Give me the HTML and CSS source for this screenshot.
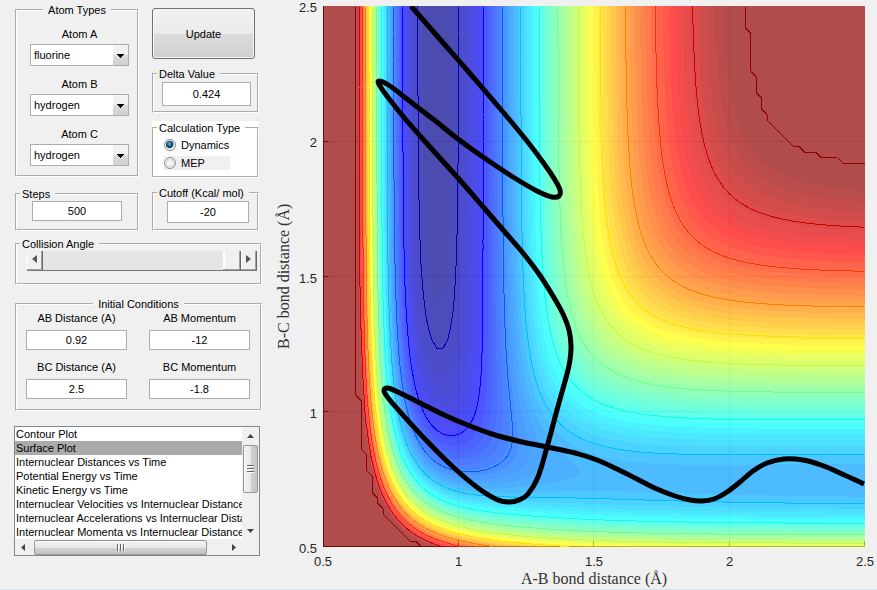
FILE: index.html
```html
<!DOCTYPE html>
<html lang="en">
<head>
<meta charset="utf-8">
<title>LEPS surface explorer</title>
<link rel="stylesheet" href="styles.css">
</head>
<body>
<main class="app">
  <form class="sidebar">
    <div class="columns">
      <div class="column column-left">
        <fieldset class="panel">
          <legend class="legend-center">Atom Types</legend>
          <div class="content atoms">
            <div class="field"><label for="atom-a">Atom A</label>
              <select id="atom-a" class="combo"><option>fluorine</option><option>hydrogen</option></select></div>
            <div class="field"><label for="atom-b">Atom B</label>
              <select id="atom-b" class="combo"><option>hydrogen</option><option>fluorine</option></select></div>
            <div class="field"><label for="atom-c">Atom C</label>
              <select id="atom-c" class="combo"><option>hydrogen</option><option>fluorine</option></select></div>
          </div>
        </fieldset>
        <fieldset class="panel">
          <legend>Steps</legend>
          <div class="content steps"><input class="box" type="text" value="500" aria-label="Steps"></div>
        </fieldset>
      </div>
      <div class="column column-right">
        <button class="update" type="button">Update</button>
        <fieldset class="panel">
          <legend>Delta Value</legend>
          <div class="content delta"><input class="box box-tall" type="text" value="0.424" aria-label="Delta Value"></div>
        </fieldset>
        <div class="paper">
          <fieldset class="panel">
            <legend>Calculation Type</legend>
            <div class="content calc">
              <label class="radio"><input type="radio" name="calc" checked>Dynamics</label>
              <label class="radio radio-shaded"><input type="radio" name="calc">MEP</label>
            </div>
          </fieldset>
        </div>
        <fieldset class="panel">
          <legend>Cutoff (Kcal/ mol)</legend>
          <div class="content cutoff"><input class="box box-mid" type="text" value="-20" aria-label="Cutoff (Kcal/ mol)"></div>
        </fieldset>
      </div>
    </div>

    <fieldset class="panel panel-angle">
      <legend>Collision Angle</legend>
      <div class="content angle">
        <div class="slider">
          <button type="button" class="step" aria-label="Decrease"><svg width="5" height="8" viewBox="0 0 5 8"><path d="M5 0v8L0 4z"/></svg></button>
          <input type="range" min="0" max="180" value="180" aria-label="Collision Angle">
          <button type="button" class="step" aria-label="Increase"><svg width="5" height="8" viewBox="0 0 5 8"><path d="M0 0v8l5-4z"/></svg></button>
        </div>
      </div>
    </fieldset>

    <fieldset class="panel panel-initial">
      <legend class="legend-center">Initial Conditions</legend>
      <div class="content pairs">
        <div class="field"><label for="ab-d">AB Distance (A)</label><input id="ab-d" class="box" type="text" value="0.92"></div>
        <div class="field"><label for="ab-m">AB Momentum</label><input id="ab-m" class="box" type="text" value="-12"></div>
        <div class="field"><label for="bc-d">BC Distance (A)</label><input id="bc-d" class="box" type="text" value="2.5"></div>
        <div class="field"><label for="bc-m">BC Momentum</label><input id="bc-m" class="box" type="text" value="-1.8"></div>
      </div>
    </fieldset>

    <div class="listbox">
      <select class="list" size="8" aria-label="Plot type">
        <option>Contour Plot</option>
        <option selected>Surface Plot</option>
        <option>Internuclear Distances vs Time</option>
        <option>Potential Energy vs Time</option>
        <option>Kinetic Energy vs Time</option>
        <option>Internuclear Velocities vs Internuclear Distance</option>
        <option>Internuclear Accelerations vs Internuclear Distance</option>
        <option>Internuclear Momenta vs Internuclear Distance</option>
      </select>
      <div class="vbar">
        <svg width="7" height="4" viewBox="0 0 7 4"><path d="M0 4h7L3.500 0z"/></svg>
        <div class="grip grip-v"><i></i><i></i><i></i></div>
        <svg class="vbar-down" width="7" height="4" viewBox="0 0 7 4"><path d="M0 0h7L3.500 4z"/></svg>
      </div>
      <div class="hbar">
        <svg width="4" height="7" viewBox="0 0 4 7"><path d="M4 0v7L0 3.500z"/></svg>
        <div class="grip grip-h"><i></i><i></i><i></i></div>
        <svg class="hbar-right" width="4" height="7" viewBox="0 0 4 7"><path d="M0 0v7l4-3.500z"/></svg>
      </div>
    </div>
  </form>

  <section class="figure">
    <div class="y-label">B-C bond distance (Å)</div>
    <ul class="y-ticks"><li>2.5</li><li>2</li><li>1.5</li><li>1</li><li>0.5</li></ul>
    <div class="plot">
      <svg viewBox="0 0 542 541">
        <path class="grid" d="M135.500 0V541M270.500 0V541M406.500 0V541M0 135.500H542M0 270.500H542M0 405.500H542"/>
        <path class="axis" d="M.5 0V540.500H542M.5 135.500h5M.5 270.500h5M.5 405.500h5M135.500 541v-6M270.500 541v-6M406.500 541v-6M541.500 541v-6"/>
      </svg>
      <canvas id="surface" width="542" height="541"></canvas>
      <svg class="overlay" viewBox="0 0 542 541"><g id="contours"></g><path id="path" class="path"/></svg>
    </div>
    <ul class="x-ticks"><li>0.5</li><li>1</li><li>1.5</li><li>2</li><li>2.5</li></ul>
    <div class="x-label">A-B bond distance (Å)</div>
  </section>
</main>
<script src="surface.js"></script>
</body>
</html>
```
FILE: styles.css
```css
* { box-sizing: border-box; }

body {
  margin: 0;
  min-height: 100vh;
  padding-top: 3px;
  background: #f0f0f0;
  border-bottom: 1px solid #d4e2f0;
  color: #000;
  font: 11px/14px "Liberation Sans", Arial, sans-serif;
}

input, select, button { font: inherit; color: inherit; margin: 0; }
ul { list-style: none; margin: 0; padding: 0; }
svg { display: block; }

.app { display: flex; align-items: flex-start; padding: 0 12px 0 15px; }
.sidebar { flex: none; width: 247px; }
.columns { display: grid; grid-template-columns: 124px 107px; column-gap: 13px; }
.column { display: flex; flex-direction: column; }
.column-left { gap: 10px; }
.column-right { gap: 8px; padding-top: 5px; }

/* Etched group boxes */
.panel { margin: 0; min-width: 0; border: 2px groove #fff; padding: 0 3px; }
.panel legend { padding: 0 5px 0 2px; white-space: nowrap; }
.panel .legend-center { margin: 0 auto; padding: 0 5px; }
.atoms { padding: 10px 5px 9px 10px; }
.steps { padding: 0 12px 8px; }
.delta { padding: 1px 3px 5px 5px; }
.cutoff { padding: 1px 5px 6px 10px; }
.calc { padding: 1px 5px 4px 7px; }
.angle { padding: 0 0 12px 7px; }
.pairs { padding: 0 6px 10px; display: grid; grid-template-columns: 101px 101px; gap: 10px 22px; }
.panel-angle { margin-top: 6px; }
.panel-initial { margin-top: 12px; }
.paper { background: #fff; }

.field { display: flex; flex-direction: column; text-align: center; gap: 5px; }
.atoms .field { gap: 3px; }
.atoms .field + .field { margin-top: 11px; }

.box {
  display: block;
  width: 100%;
  height: 20px;
  padding: 0;
  border: 1px solid #abadb3;
  background: #fff;
  text-align: center;
}
.box-mid { height: 22px; }
.box-tall { height: 24px; }

.combo {
  appearance: none;
  width: 100%;
  height: 22px;
  padding: 0 0 0 3px;
  border: 1px solid #abadb3;
  border-radius: 0;
  background:
    linear-gradient(#000, #000) right 4px top 9px / 7px 1px no-repeat,
    linear-gradient(#000, #000) right 5px top 10px / 5px 1px no-repeat,
    linear-gradient(#000, #000) right 6px top 11px / 3px 1px no-repeat,
    linear-gradient(#000, #000) right 7px top 12px / 1px 1px no-repeat,
    linear-gradient(#f2f2f2 50%, #dcdcdc 50%, #d0d0d0) right 0 top 0 / 15px 100% no-repeat,
    #fff;
}

.update {
  height: 51px;
  width: 103px;
  border: 1px solid #707070;
  border-radius: 3px;
  box-shadow: inset 0 0 0 1px #f6f6f6;
  background: linear-gradient(#f2f2f2, #ebebeb 50%, #dcdcdc 50%, #cfcfcf);
}

.radio { display: flex; align-items: center; gap: 5px; height: 18px; }
.radio input {
  appearance: none;
  width: 12px;
  height: 12px;
  border: 1px solid #8e8f8f;
  border-radius: 50%;
  background: radial-gradient(circle, #f4f4f4 30%, #d0d3d6 60%);
  box-shadow: inset 0 0 0 1px #f4f4f4;
}
.radio input:checked { background: radial-gradient(circle at 45% 40%, #7cc8e8 0, #1a6f9c 22%, #0c3550 46%, #dfe3e6 52%); }
.radio-shaded { height: 14px; width: 66px; margin: 2px 0; background: #f0f0f0; }

.slider { display: flex; height: 20px; border-bottom: 1px solid #777; background: #e5e5e5; }
.step {
  display: flex;
  align-items: center;
  justify-content: center;
  width: 16px;
  padding: 0 0 3px;
  border: 0;
  border-right: 1px solid #696969;
  background: #f0f0f0;
  box-shadow: inset -1px -1px #a0a0a0, inset 1px 0 #fff;
}
.step svg { fill: #555; }
.slider input { appearance: none; flex: 1; min-width: 0; height: 19px; background: #e5e5e5; }
.slider input::-webkit-slider-thumb {
  appearance: none;
  width: 18px;
  height: 19px;
  background: #f0f0f0;
  border-right: 1px solid #696969;
  box-shadow: inset -1px -1px #a0a0a0, inset 2px 0 #fff;
}

.listbox {
  display: grid;
  grid-template: 112px 16px / 1fr 17px;
  width: 246px;
  margin: 15px 0 0 -1px;
  border: 1px solid #828790;
  background: #f0f0f0;
}
.list {
  width: 100%;
  height: 112px;
  padding: 0;
  border: 0;
  border-radius: 0;
  background: #fff;
  overflow: hidden;
  outline: none;
}
.list::-webkit-scrollbar { display: none; }
.list option { min-height: 14px; height: 14px; padding: 1px 1px 0; line-height: 14px; color: #000; }
.list option:checked { background: linear-gradient(#aaa, #aaa); color: #000; }
.vbar, .hbar { display: flex; align-items: center; background: #f0f0f0; }
.vbar { flex-direction: column; padding: 7px 0 6px; }
.vbar-down { margin-top: auto; }
.hbar { padding: 0 6px 0 6px; }
.hbar-right { margin-left: auto; }
.vbar svg, .hbar svg { fill: #444; }
.grip { display: flex; align-items: center; justify-content: center; gap: 1px; border: 1px solid #979797; border-radius: 2px; }
.grip-v { flex-direction: column; width: 15px; height: 48px; margin-top: 7px; background: linear-gradient(90deg, #f5f5f5, #e6e6e6 50%, #d2d2d2 50%, #c4c4c4); }
.grip-h { width: 173px; height: 15px; margin-left: 9px; background: linear-gradient(#f5f5f5, #e6e6e6 50%, #d2d2d2 50%, #c4c4c4); }
.grip i { background: #666; border: 0 solid #fff; }
.grip-v i { width: 7px; height: 2px; border-bottom-width: 1px; }
.grip-h i { width: 2px; height: 7px; border-right-width: 1px; }

/* Plot */
.figure {
  flex: 1;
  min-width: 0;
  display: grid;
  grid-template-columns: 18px 18px minmax(0, 1fr);
  column-gap: 6px;
  margin-left: 13px;
  padding-top: 3px;
  color: #262626;
}
.y-label, .x-label { font: 16px/18px "Liberation Serif", "Times New Roman", serif; text-align: center; color: #333; }
.y-label { writing-mode: vertical-rl; transform: rotate(180deg); }
.x-label { grid-column: 3; }
.y-ticks, .x-ticks { display: flex; justify-content: space-between; font-size: 13px; line-height: 16px; }
.y-ticks { flex-direction: column; text-align: right; }
.y-ticks li { height: 0; line-height: 4px; }
.x-ticks { grid-column: 3; padding-top: 7px; }
.x-ticks li { width: 0; display: flex; justify-content: center; }
.plot { display: grid; background: #fff; }
.plot > * { grid-area: 1 / 1; display: block; width: 100%; }
.plot canvas { opacity: .7; }
.overlay { z-index: 1; }
.grid { stroke: #262626; stroke-opacity: .15; }
.axis { stroke: #262626; fill: none; }
.contour { fill: none; stroke-width: 1; shape-rendering: crispEdges; }
.path { fill: none; stroke: #000; stroke-width: 5; stroke-linejoin: round; }
```
FILE: surface.js
```js
// London-Eyring-Polanyi-Sato potential for collinear F + H2, in kcal/mol.
const FH = { D: 141.2, b: 2.2187, r: 0.917, S: 0.167 };
const HH = { D: 109.45, b: 1.942, r: 0.7419, S: 0.2 };
const CUTOFF = -22.3, FLOOR = -141.2, SPACING = 10.45;

function bond(p, r) {
  const e = Math.exp(-p.b * (r - p.r));
  const s = p.D * (e * e - 2 * e);
  const t = p.D / 2 * (e * e + 2 * e) * (1 - p.S) / (1 + p.S);
  return [(s + t) / 2, (s - t) / 2];
}
function energy(x, y) {
  const [q1, j1] = bond(FH, x), [q2, j2] = bond(HH, y), [q3, j3] = bond(FH, x + y);
  const v = q1 + q2 + q3 - Math.sqrt(((j1 - j2) ** 2 + (j2 - j3) ** 2 + (j3 - j1) ** 2) / 2);
  return Math.min(v, CUTOFF);
}

// 64-step jet colour map
function jet(v) {
  const n = Math.max(0, Math.min(62, Math.floor((v - FLOOR) / (CUTOFF - FLOOR) * 64))) + 1;
  const ramp = c => Math.round(255 * Math.max(0, Math.min(1, 1.5 - Math.abs(n - c) / 16)));
  return [ramp(48), ramp(32), ramp(16)];
}

const W = 542, H = 541;
const canvas = document.getElementById('surface');
const ctx = canvas.getContext('2d');
const image = ctx.createImageData(W, H);
for (let j = 0; j < H; j++) {
  for (let i = 0; i < W; i++) {
    const c = jet(energy(0.5 + 2 * i / (W - 1), 2.5 - 2 * j / (H - 1)));
    image.data.set([c[0], c[1], c[2], 255], 4 * (j * W + i));
  }
}
ctx.putImageData(image, 0, 0);

// Contour lines by marching squares on a 0.02 grid
const N = 100;
const v = [];
for (let j = 0; j <= N; j++) {
  v.push([]);
  for (let i = 0; i <= N; i++) v[j].push(energy(0.5 + i * 0.02, 2.5 - j * 0.02));
}
const px = i => 0.5 + i * (W - 1) / N, py = j => 0.5 + j * (H - 1) / N;
const group = document.getElementById('contours');
for (let k = 0; k < 12; k++) {
  const level = CUTOFF - k * SPACING;
  let d = '';
  for (let j = 0; j < N; j++) {
    for (let i = 0; i < N; i++) {
      const corners = [[i, j], [i + 1, j], [i + 1, j + 1], [i, j + 1]];
      const cuts = [];
      corners.forEach((a, n) => {
        const b = corners[(n + 1) % 4];
        const va = v[a[1]][a[0]], vb = v[b[1]][b[0]];
        if ((va >= level) !== (vb >= level)) {
          const t = (level - va) / (vb - va);
          cuts.push([px(a[0] + t * (b[0] - a[0])), py(a[1] + t * (b[1] - a[1]))]);
        }
      });
      for (let n = 0; n + 1 < cuts.length; n += 2) {
        d += 'M' + cuts[n].map(c => c.toFixed(2)) + 'L' + cuts[n + 1].map(c => c.toFixed(2));
      }
    }
  }
  const line = document.createElementNS('http://www.w3.org/2000/svg', 'path');
  line.setAttribute('d', d);
  line.setAttribute('class', 'contour');
  line.setAttribute('stroke', 'rgb(' + jet(level) + ')');
  group.appendChild(line);
}

// Trajectory, drawn as a smooth curve through its samples
const P = [[88,0],[115,31],[144,64],[180,106],[204,135],[222,159],[232,174],[237,184],[236,190],[229,191],[214,185],
  [190,171],[160,151],[135,133],[110,113],[84,93],[67,80],[56,75],[57,80],[67,94],[84,115],[107,141],[135,172],[162,203],
  [181,225],[200,247],[216,268],[230,290],[240,308],[246,324],[248,340],[247,354],[244,368],[234,404],[224,441],[215,471],
  [205,488],[196,494],[187,496],[175,494],[155,482],[129,460],[102,433],[79,408],[66,393],[61,385],[65,382],[79,388],
  [99,398],[119,408],[142,418],[169,428],[195,435],[224,441],[252,447],[274,454],[294,463],[314,473],[334,483],[352,490],
  [367,494],[379,495],[391,493],[404,486],[417,476],[430,465],[444,457],[461,453],[480,454],[498,459],[517,467],[541,478]];
let d = 'M' + P[0];
for (let n = 0; n + 1 < P.length; n++) {
  const a = P[n - 1] || P[n], b = P[n], c = P[n + 1], e = P[n + 2] || c;
  d += 'C' + [b[0] + (c[0] - a[0]) / 6, b[1] + (c[1] - a[1]) / 6, c[0] - (e[0] - b[0]) / 6, c[1] - (e[1] - b[1]) / 6, c[0], c[1]];
}
document.getElementById('path').setAttribute('d', d);
```
